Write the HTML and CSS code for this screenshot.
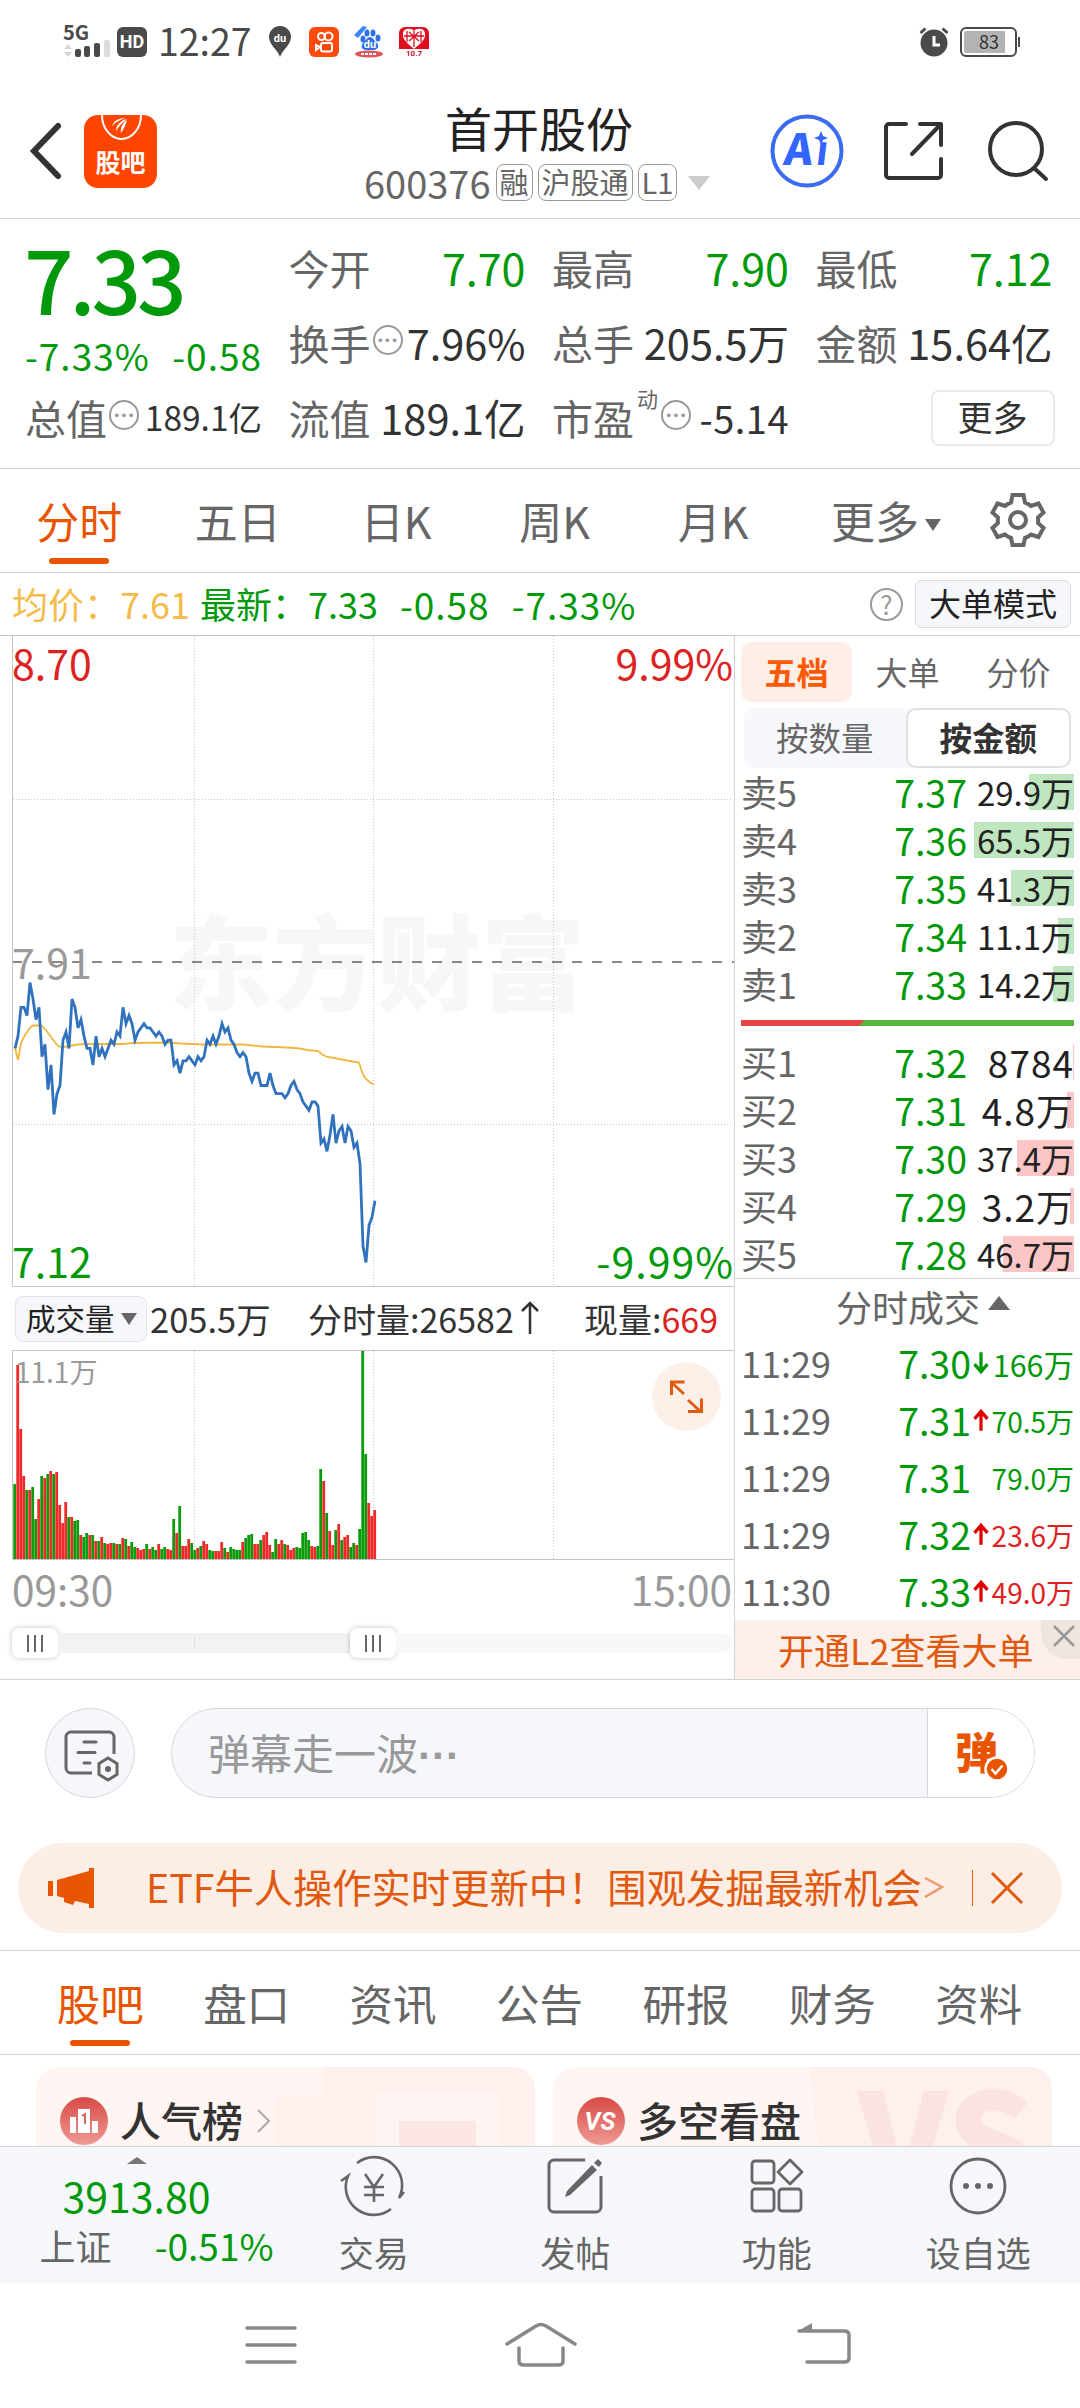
FILE: index.html
```
<!DOCTYPE html>
<html lang="zh-CN">
<head>
    <meta charset="utf-8">
    <title>首开股份 600376</title>
    <link rel="stylesheet" href="styles.css">
    <script src="chart.js" defer></script>
</head>
<body>

<!-- status bar -->
<div class="status">
    <svg class="signal" width="48" height="34" viewBox="0 0 48 34">
        <text x="0" y="15" class="net">5G</text>
        <path d="M1 24l4-5 4 5zM1 27l4 5 4-5z" fill="#d5d5d5"/>
        <rect x="12" y="24" width="6" height="8" rx="2"/>
        <rect x="21" y="21" width="6" height="11" rx="2"/>
        <rect x="31" y="18" width="6" height="14" rx="2"/>
        <rect x="41" y="15" width="6" height="17" rx="2" fill="#dcdcdc"/>
    </svg>
    <span class="hd">HD</span>
    <span class="clock">12:27</span>
    <svg class="pin" width="24" height="32" viewBox="0 0 24 32">
        <path d="M12 31C10 24 1 19 1 11a11 11 0 0 1 22 0c0 8-9 13-11 20z" fill="#4a4a4a"/>
        <text x="12" y="16" text-anchor="middle" class="du">du</text>
    </svg>
    <svg class="app" width="30" height="30" viewBox="0 0 30 30">
        <rect width="30" height="30" rx="6" fill="#ff4a0c"/>
        <g fill="none" stroke="#fff" stroke-width="2">
            <circle cx="12.500" cy="9.500" r="3.500"/>
            <circle cx="19.500" cy="9.500" r="4"/>
            <rect x="12" y="16" width="11" height="8.500" rx="2"/>
            <path d="M11 20l-4-2v5z"/>
        </g>
    </svg>
    <svg class="app" width="30" height="32" viewBox="0 0 30 32">
        <path d="M0 9L9 0l4 1-9 11z" fill="#3d86f5"/>
        <g fill="#2f6fe8">
            <ellipse cx="9" cy="13" rx="2.500" ry="3.500"/>
            <ellipse cx="13" cy="7" rx="2.500" ry="3.500"/>
            <ellipse cx="19" cy="7" rx="2.500" ry="3.500"/>
            <ellipse cx="24" cy="12" rx="2.500" ry="3.500"/>
            <path d="M16 11c3 0 4 4 7 6 3 3 0 7-3 7h-8c-4 0-6-4-3-7 3-2 4-6 7-6z"/>
        </g>
        <text x="16" y="22" text-anchor="middle" class="du">du</text>
        <ellipse cx="15" cy="28" rx="14" ry="3.500" fill="#e0555a"/>
        <path d="M7 28h16" stroke="#fff" stroke-width="2" stroke-dasharray="3 1"/>
    </svg>
    <svg class="app" width="30" height="30" viewBox="0 0 30 30">
        <path d="M6 0h18a6 6 0 0 1 6 6v16H0V6a6 6 0 0 1 6-6z" fill="#e00d1e"/>
        <path d="M15 4c3-4 12-3 11 4 0 6-7 10-11 14C11 18 4 14 4 8 3 1 12 0 15 4z" fill="#fff"/>
        <path d="M15 4v16M8 4v11M22 4v11M5 9h20M10 14l10-9M20 14L10 5" stroke="#e00d1e" stroke-width="1.300"/>
        <text x="15" y="29" text-anchor="middle" class="sale">10.7</text>
    </svg>
    <svg class="alarm" width="30" height="30" viewBox="0 0 30 30">
        <circle cx="15" cy="16" r="13.500" fill="#4a4a4a"/>
        <path d="M1.500 6l5-4.500M28.500 6l-5-4.500" stroke="#4a4a4a" stroke-width="3"/>
        <path d="M15 9v9h6" fill="none" stroke="#fff" stroke-width="3"/>
    </svg>
    <span class="battery"><i></i><b>83</b></span>
</div>

<!-- title bar -->
<div class="header">
    <svg class="back" width="32" height="56" viewBox="0 0 32 56"><path d="M28 3L4 28l24 25" fill="none" stroke="#333" stroke-width="6" stroke-linecap="round"/></svg>
    <div class="logo">
        <svg width="44" height="28" viewBox="0 0 44 28">
            <path d="M3 0a19.500 24 0 0 0 39 0" fill="none" stroke="#fff" stroke-width="2"/>
            <path d="M13 11c2-6 8-8 13-8-5 2-9 4-13 8zM17 16c0-6 5-11 11-12-4 3-8 7-11 12zM22 18c-1-5 2-11 6-13-1 4-3 9-6 13z" fill="#fff"/>
        </svg>
        <span>股吧</span>
    </div>
    <div class="stock">
        <div class="name">首开股份</div>
        <div class="code">600376<span class="tag">融</span><span class="tag">沪股通</span><span class="tag">L1</span><i class="tri"></i></div>
    </div>
    <svg class="ai" width="74" height="74" viewBox="0 0 74 74">
        <circle cx="37" cy="37" r="34.500" fill="none" stroke="#3b6cf0" stroke-width="4"/>
        <g transform="translate(6 0) skewX(-7)"><text x="13" y="51">A</text><text x="45" y="51">ı</text></g>
        <path d="M51 17l2 5 5 2-5 2-2 5-2-5-5-2 5-2z" fill="#3366ff"/>
    </svg>
    <svg class="share" width="62" height="62" viewBox="0 0 62 62">
        <path d="M23 4H6a3 3 0 0 0-3 3v48a3 3 0 0 0 3 3h49a3 3 0 0 0 3-3V39M37 4h21v21M58 4L29 34" fill="none" stroke="#333" stroke-width="4" stroke-linecap="round" stroke-linejoin="round"/>
    </svg>
    <svg class="search" width="62" height="62" viewBox="0 0 62 62">
        <g fill="none" stroke="#333" stroke-width="4" stroke-linecap="round"><circle cx="29" cy="29" r="26"/><path d="M47 48l12 11"/></g>
    </svg>
</div>

<!-- quote -->
<div class="quote">
    <div class="last">
        <div class="price">7.33</div>
        <div class="change"><span>-7.33%</span><span>-0.58</span></div>
    </div>
    <div class="cell"><label>今开</label><b class="down">7.70</b></div>
    <div class="cell"><label>最高</label><b class="down">7.90</b></div>
    <div class="cell"><label>最低</label><b class="down">7.12</b></div>
    <div class="cell"><label>换手</label><i class="dots">···</i><b>7.96%</b></div>
    <div class="cell"><label>总手</label><b>205.5万</b></div>
    <div class="cell"><label>金额</label><b>15.64亿</b></div>
    <div class="cell"><label>总值</label><i class="dots">···</i><b class="small">189.1亿</b></div>
    <div class="cell"><label>流值</label><b>189.1亿</b></div>
    <div class="cell"><label>市盈</label><sup>动</sup><i class="dots">···</i><b class="mid">-5.14</b></div>
    <div class="cell right"><span class="more">更多</span></div>
</div>

<!-- period tabs -->
<div class="periods">
    <span class="on">分时</span>
    <span>五日</span>
    <span>日K</span>
    <span>周K</span>
    <span>月K</span>
    <span class="wide">更多<i class="tri"></i></span>
    <svg width="56" height="56" viewBox="-28 -28 56 56">
        <path d="M-5.500-25h11l1.500 7.500a19 19 0 0 1 6 3.500l7.500-2.500 5 9-5.500 5a19 19 0 0 1 0 5.500l5.500 5-5 9-7.500-2.500a19 19 0 0 1-6 3.500L5.500 25h-11l-1.500-7a19 19 0 0 1-6-3.500l-7.500 2.500-5-9 5.500-5a19 19 0 0 1 0-5.500l-5.500-5 5-9 7.500 2.500a19 19 0 0 1 6-3.500z" fill="none" stroke="#666" stroke-width="4"/>
        <circle r="8" fill="none" stroke="#666" stroke-width="4"/>
    </svg>
</div>

<div class="info">
    <span class="avg">均价：7.61</span>
    <span class="now">最新：7.33</span>
    <span class="diff">-0.58</span>
    <span class="diff">-7.33%</span>
    <i class="help">?</i>
    <span class="mode">大单模式</span>
</div>

<div class="main">
    <div class="left">
        <!-- minute chart -->
        <svg class="chart" width="734" height="652" viewBox="0 635 734 652">
            <text x="377" y="1003" text-anchor="middle" class="watermark">东方财富</text>
            <g class="grid">
                <path d="M194.500 636v650M373.500 636v650M553.500 636v650M13 799.500h720M13 1124.500h720"/>
            </g>
            <path d="M12 962h722" class="prev"/>
            <path d="M12.500 635v651.500H734M0 635.500h734" class="frame"/>
            <polyline class="avgline" points="15,1048 18,1060 21,1043 24,1037 27,1032 30,1028 33,1025.500 39,1025.500 42,1026 45,1029 48,1033 54,1041 58,1046 62,1047 67,1046.500 77,1044.500 90,1044 123,1044 133,1043 170,1042.500 180,1043.500 203,1044.500 243,1044.500 263,1046.500 287,1047.500 300,1048.500 307,1050 318,1051 323,1055 328,1057 347,1060.500 359,1062.500 362,1072 365,1078 370,1082.500 374,1084.500"/>
            <polyline id="price" class="priceline"/>
            <text x="12" y="680" class="up">8.70</text>
            <text x="733" y="680" class="up" text-anchor="end">9.99%</text>
            <text x="12" y="979" class="flat">7.91</text>
            <text x="12" y="1278" class="dn">7.12</text>
            <text x="734" y="1278" class="dn spaced" text-anchor="end">-9.99%</text>
        </svg>

        <div class="volhead">
            <span class="pick">成交量<i class="tri"></i></span>
            <span class="total">205.5万</span>
            <span class="minute">分时量:26582<svg width="20" height="36" viewBox="0 0 20 36"><path d="M10 34V3M2 11l8-8 8 8" fill="none" stroke="#333" stroke-width="2.500"/></svg></span>
            <span>现量:<em>669</em></span>
        </div>

        <!-- volume -->
        <svg class="chart" width="734" height="210" viewBox="0 1350 734 210">
            <path d="M194.500 1351v208M373.500 1351v208M553.500 1351v208" class="grid"/>
            <path d="M734 1350.500H12.500v209H734" class="frame"/>
            <g id="volume"></g>
            <text x="15" y="1383" class="volmax">11.1万</text>
            <circle cx="686.500" cy="1396.500" r="34.500" fill="#fdf0e9"/>
            <path d="M671.500 1395v-13h13M672 1383l12 11M688 1400l13 12M688 1411.500h13.500v-13" fill="none" stroke="#e05a10" stroke-width="3"/>
        </svg>

        <div class="times"><span>09:30</span><span>15:00</span></div>
        <div class="slider">
            <span class="thumb"><i></i><i></i><i></i></span>
            <span class="range"></span>
            <span class="thumb"><i></i><i></i><i></i></span>
            <span class="rest"></span>
        </div>
    </div>

    <div class="side">
        <div class="sidetabs"><span class="on">五档</span><span>大单</span><span>分价</span></div>
        <div class="toggle"><span>按数量</span><span class="on">按金额</span></div>
        <div class="book sell">
            <div><span>卖5</span><b>7.37</b><em><i style="width:45px"></i>29.9万</em></div>
            <div><span>卖4</span><b>7.36</b><em><i style="width:100px"></i>65.5万</em></div>
            <div><span>卖3</span><b>7.35</b><em><i style="width:63px"></i>41.3万</em></div>
            <div><span>卖2</span><b>7.34</b><em><i style="width:16px"></i>11.1万</em></div>
            <div><span>卖1</span><b>7.33</b><em><i style="width:21px"></i>14.2万</em></div>
        </div>
        <div class="ratio"></div>
        <div class="book buy">
            <div><span>买1</span><b>7.32</b><em class="big"><i style="width:1px"></i>8784</em></div>
            <div><span>买2</span><b>7.31</b><em class="big"><i style="width:7px"></i>4.8万</em></div>
            <div><span>买3</span><b>7.30</b><em><i style="width:57px"></i>37.4万</em></div>
            <div><span>买4</span><b>7.29</b><em class="big"><i style="width:4px"></i>3.2万</em></div>
            <div><span>买5</span><b>7.28</b><em><i style="width:71px"></i>46.7万</em></div>
        </div>
        <div class="dealhead">分时成交<i></i></div>
        <div class="deals">
            <div><span>11:29</span><b>7.30</b><svg width="18" height="26" viewBox="0 0 16 24"><path d="M8 2v18M2 13l6 7 6-7" stroke="#00990a"/></svg><em class="dn large">166万</em></div>
            <div><span>11:29</span><b>7.31</b><svg width="18" height="26" viewBox="0 0 16 24"><path d="M8 22V4M2 11l6-7 6 7" stroke="#e00000"/></svg><em class="dn">70.5万</em></div>
            <div><span>11:29</span><b>7.31</b><svg width="18" height="26"></svg><em class="dn">79.0万</em></div>
            <div><span>11:29</span><b>7.32</b><svg width="18" height="26" viewBox="0 0 16 24"><path d="M8 22V4M2 11l6-7 6 7" stroke="#e00000"/></svg><em class="up">23.6万</em></div>
            <div><span>11:30</span><b>7.33</b><svg width="18" height="26" viewBox="0 0 16 24"><path d="M8 22V4M2 11l6-7 6 7" stroke="#e00000"/></svg><em class="up">49.0万</em></div>
        </div>
        <div class="promo">开通L2查看大单
            <span class="close"><svg width="24" height="24" viewBox="0 0 24 24"><path d="M2 2l20 20M22 2L2 22" stroke="#999" stroke-width="2.500"/></svg></span>
        </div>
    </div>
</div>

<!-- danmu input -->
<div class="danmu">
    <span class="set">
        <svg width="56" height="52" viewBox="0 0 56 52">
            <path d="M50 23V6a5 5 0 0 0-5-5H7a5 5 0 0 0-5 5v31a5 5 0 0 0 5 5h21" fill="none" stroke="#666" stroke-width="3" transform="translate(0 1)"/>
            <path d="M20 12h12M14 22.500h17M20 33h6" stroke="#666" stroke-width="3" stroke-linecap="round"/>
            <path d="M44 28l9 5.500v11L44 50l-9-5.500v-11z" fill="none" stroke="#666" stroke-width="3"/>
            <circle cx="44" cy="39" r="3" fill="#666"/>
        </svg>
    </span>
    <div class="input">
        <span class="hint">弹幕走一波<b>···</b></span>
        <span class="send">弹<svg width="26" height="26" viewBox="0 0 26 26"><circle cx="13" cy="13" r="11.500" fill="#e85400" stroke="#fff" stroke-width="2.500"/><path d="M7.500 13l4 4.500 7-8" fill="none" stroke="#fff" stroke-width="2.500"/></svg></span>
    </div>
</div>

<div class="banner">
    <svg width="46" height="42" viewBox="0 0 46 42"><path d="M0 14h5v15H0zM9 13l32-9V1h5v40h-5v-4l-14-3-2 4-9-3v-4l-7-2z" fill="#e85400"/></svg>
    <span class="text">ETF牛人操作实时更新中！围观发掘最新机会</span>
    <svg class="gt" width="20" height="24" viewBox="0 0 20 24"><path d="M1 2l17 9L1 21" fill="none" stroke="#eb9a6d" stroke-width="2.500"/></svg>
    <i></i>
    <svg width="34" height="34" viewBox="0 0 34 34"><path d="M2 2l30 30M32 2L2 32" stroke="#e0590f" stroke-width="3"/></svg>
</div>

<div class="sections">
    <span class="on">股吧</span><span>盘口</span><span>资讯</span><span>公告</span><span>研报</span><span>财务</span><span>资料</span>
</div>

<div class="cards">
    <div class="card">
        <svg class="deco" width="260" height="80" viewBox="0 0 260 80"><path d="M0 30h48V0h212v80H0z" fill="#fdf0ed"/><path d="M102 25h122v55H102z" fill="#fef4f2"/><path d="M124 54h77v26h-77z" fill="#fce6e3"/></svg>
        <svg width="48" height="48" viewBox="0 0 48 48">
            <circle cx="24" cy="24" r="24" fill="url(#red)"/>
            <path d="M10 20h6v16h-6zM18 12h12v24H18zM32 24h6v12h-6z" fill="#fff"/>
            <path d="M22 19l3-2v10" fill="none" stroke="#dd6560" stroke-width="2"/>
        </svg>
        <b>人气榜</b>
        <svg width="14" height="24" viewBox="0 0 14 24"><path d="M1 1l11 11L1 23" fill="none" stroke="#aaa" stroke-width="2"/></svg>
    </div>
    <div class="card">
        <svg class="deco" width="242" height="80" viewBox="0 0 242 80"><path d="M0 0h242v80H8z" fill="#fdf0ed"/><text x="48" y="128">VS</text></svg>
        <svg width="48" height="48" viewBox="0 0 48 48">
            <defs><linearGradient id="red" x2="0" y2="1"><stop stop-color="#d84a45"/><stop offset="1" stop-color="#f09a95"/></linearGradient></defs>
            <circle cx="24" cy="24" r="24" fill="url(#red)"/>
            <text x="23" y="33" text-anchor="middle" class="vs">VS</text>
        </svg>
        <b>多空看盘</b>
    </div>
</div>

<!-- bottom bar -->
<div class="toolbar">
    <div class="index">
        <i></i>
        <div class="point">3913.80</div>
        <div class="row"><span>上证</span><b>-0.51%</b></div>
    </div>
    <div class="tool">
        <svg width="68" height="60" viewBox="0 0 68 60">
            <g fill="none" stroke="#666" stroke-width="2.600">
                <path d="M17 7a28 28 0 0 1 42 35l5-6M51 53A28 28 0 0 1 8 20l-7 5"/>
                <path d="M25 18l9 13 9-13M34 31v15M24 31h20M24 39h20"/>
            </g>
        </svg>交易
    </div>
    <div class="tool">
        <svg width="56" height="60" viewBox="0 0 56 60">
            <path d="M38 4H7a5 5 0 0 0-5 5v42a5 5 0 0 0 5 5h42a5 5 0 0 0 5-5V20" fill="none" stroke="#666" stroke-width="3"/>
            <path d="M45 9l5 5-27 25-5 2 2-6zM47 7l4-4 4 4-3 4z" fill="#666"/>
        </svg>发帖
    </div>
    <div class="tool">
        <svg width="54" height="60" viewBox="0 0 54 60">
            <g fill="none" stroke="#666" stroke-width="2.800"><rect x="2" y="5" width="22" height="22" rx="3"/><rect x="2" y="33" width="22" height="22" rx="3"/><rect x="29" y="33" width="22" height="22" rx="3"/><path d="M40 4l12 12-12 12-12-12z" stroke-linejoin="round"/></g>
        </svg>功能
    </div>
    <div class="tool">
        <svg width="60" height="60" viewBox="0 0 60 60">
            <circle cx="30" cy="30" r="27" fill="none" stroke="#666" stroke-width="2.800"/>
            <g fill="#666"><circle cx="18" cy="30" r="3"/><circle cx="30" cy="30" r="3"/><circle cx="42" cy="30" r="3"/></g>
        </svg>设自选
    </div>
</div>

<!-- system navigation -->
<div class="nav">
    <svg width="52" height="40" viewBox="0 0 52 40"><path d="M2 3h48M2 20h48M2 37h48"/></svg>
    <svg width="72" height="46" viewBox="0 0 72 46"><path d="M2 22L31 4q5-3 10 0l29 18M14 26v13q0 4 5 4h34q5 0 5-4V26"/></svg>
    <svg width="54" height="46" viewBox="0 0 54 46"><path d="M2 9h45q5 0 5 4v23q0 4-5 4H10"/><path d="M1 9L15 1v9z" class="solid"/></svg>
</div>

</body>
</html>
```

FILE: chart.js
```
// one price per minute, 9:30 - 11:30
var prices = [
    7.70, 7.73, 7.80, 7.80, 7.78, 7.86, 7.82, 7.77, 7.80, 7.68, 7.71, 7.60, 7.66, 7.54, 7.59, 7.61, 7.72, 7.74, 7.70, 7.82,
    7.80, 7.75, 7.77, 7.73, 7.70, 7.70, 7.66, 7.73, 7.68, 7.70, 7.68, 7.70, 7.72, 7.71, 7.74, 7.73, 7.80, 7.76, 7.78, 7.76,
    7.72, 7.74, 7.75, 7.76, 7.75, 7.75, 7.74, 7.73, 7.74, 7.73, 7.71, 7.72, 7.72, 7.66, 7.67, 7.64, 7.67, 7.67, 7.68, 7.67,
    7.66, 7.68, 7.67, 7.68, 7.72, 7.71, 7.73, 7.71, 7.73, 7.76, 7.74, 7.75, 7.72, 7.71, 7.69, 7.68, 7.69, 7.68, 7.64, 7.62,
    7.64, 7.64, 7.61, 7.61, 7.61, 7.64, 7.61, 7.59, 7.59, 7.59, 7.58, 7.59, 7.61, 7.62, 7.60, 7.59, 7.57, 7.56, 7.55, 7.57,
    7.57, 7.56, 7.47, 7.48, 7.45, 7.49, 7.54, 7.47, 7.50, 7.51, 7.47, 7.51, 7.50, 7.46, 7.47, 7.42, 7.22, 7.18, 7.27, 7.29, 7.33
];

// bar heights, g = falling minute, r = rising minute
var volumes = 'g75 r194 r130 r83 g69 r69 g72 g40 r60 g83 r81 g85 r88 g85 r87 r54 r36 r57 g42 r42 ' +
    'g38 g39 r24 g22 g26 r24 g24 r18 g18 r22 g16 r15 r16 g16 r15 g15 r21 g20 r13 g17 ' +
    'g12 r11 r9 r10 g15 r10 g12 g9 r15 g10 g12 r10 r9 g40 r26 g53 r13 r13 r20 g16 ' +
    'g9 r11 g13 r18 r15 g9 g8 r8 r8 r17 g11 r7 g12 g10 g9 g9 r17 g21 g24 g25 ' +
    'r15 r15 g19 r24 r27 r14 g7 g20 r15 r19 g15 r14 r9 r11 g12 g11 g26 g27 g19 r13 ' +
    'r12 g13 g90 r78 g46 r28 r14 g29 r35 g19 r22 r24 g12 g16 r14 g30 g208 g105 r56 r43 r49';

var svgns = 'http://www.w3.org/2000/svg';

var points = prices.map(function (p, i) {
    var y = 962 + (7.91 - p) * 411.6;
    return (15 + i * 3) + ',' + y.toFixed(1);
});
document.getElementById('price').setAttribute('points', points.join(' '));

volumes.split(' ').forEach(function (v, i) {
    var h = Number(v.slice(1));
    var bar = document.createElementNS(svgns, 'rect');
    bar.setAttribute('x', 13.3 + i * 3);
    bar.setAttribute('y', 1559 - h);
    bar.setAttribute('width', 2.8);
    bar.setAttribute('height', h);
    bar.setAttribute('fill', v[0] == 'g' ? '#0a9a0a' : '#ee2a2a');
    document.getElementById('volume').appendChild(bar);
});
```

FILE: styles.css
```
* {
    box-sizing: border-box;
}

body {
    margin: 0;
    width: 1080px;
    background: #fff;
    color: #333;
    font-family: "Noto Sans CJK SC", sans-serif;
    line-height: 1.1;
    white-space: nowrap;
}

i, em {
    font-style: normal;
}

b {
    font-weight: 400;
}

svg {
    display: block;
    flex: none;
    overflow: visible;
}

.tri {
    display: inline-block;
    border: 8px solid transparent;
    border-top: 12px solid #666;
    border-bottom: 0;
}

/* status bar */
.status {
    display: flex;
    align-items: center;
    height: 84px;
    padding-left: 63px;
}

.signal {
    fill: #4a4a4a;
}

.net {
    font-size: 20px;
    font-weight: 700;
}

.hd {
    width: 30px;
    height: 30px;
    margin-left: 6px;
    border-radius: 6px;
    background: #4a4a4a;
    color: #fff;
    font: 700 18px/30px Roboto, sans-serif;
    text-align: center;
}

.clock {
    margin-left: 11px;
    width: 95px;
    margin-top: -4px;
    font-size: 37.500px;
    line-height: 40px;
    color: #4a4a4a;
}

.pin {
    margin-left: 15px;
}

.du {
    fill: #fff;
    font: 700 11px Roboto, sans-serif;
}

.app {
    margin-left: 15px;
}

.pin + .app {
    margin-left: 17px;
}

.sale {
    fill: #c8102e;
    font: 700 8px Roboto, sans-serif;
}

.alarm {
    margin-left: auto;
}

.battery {
    position: relative;
    width: 57px;
    height: 30px;
    margin: 0 63px 0 11px;
    padding: 2px;
    border: 2px solid #4a4a4a;
    border-radius: 6px;
    font-size: 18px;
    line-height: 20px;
}

.battery i {
    display: block;
    width: 41px;
    height: 22px;
    border-radius: 3px 0 0 3px;
    background: #b3b3b3;
}

.battery b {
    position: absolute;
    left: 17px;
    top: 2px;
}

.battery:after {
    content: "";
    position: absolute;
    right: -5px;
    top: 8px;
    width: 2px;
    height: 10px;
    background: #4a4a4a;
}

/* title bar */
.header {
    display: flex;
    align-items: center;
    height: 135px;
    padding: 0 30px 0 30px;
    border-bottom: 1px solid #d2d4d6;
}

.logo {
    display: flex;
    flex-direction: column;
    align-items: center;
    width: 73px;
    height: 73px;
    margin-left: 22px;
    border-radius: 14px;
    background: #ff4500;
    color: #fff;
    font-size: 25px;
    font-weight: 700;
    line-height: 34px;
}

.logo span {
    margin-top: 1px;
}

.stock {
    width: 350px;
    margin-left: 207px;
}

.name {
    padding-left: 81px;
    font-size: 47px;
    line-height: 58px;
    color: #222;
}

.code {
    display: flex;
    align-items: center;
    height: 44px;
    font-size: 38px;
    color: #666;
    margin-top: 5px;
}

.tag {
    height: 37px;
    margin-left: 5px;
    padding: 0 3px;
    border: 1px solid #999;
    border-radius: 8px;
    font-size: 29px;
    line-height: 33px;
}

.code .tri {
    margin-left: 11px;
    border-width: 14px 11px 0;
    border-top-color: #ccc;
}

.ai {
    margin-left: 56px;
    fill: #3366ff;
    font: 900 43px "Noto Sans CJK SC", sans-serif;
}

.share {
    margin-left: 39px;
}

.search {
    margin: 0 0 0 42px;
}

/* quote */
.quote {
    display: grid;
    grid-template-columns: repeat(4, 237px);
    grid-auto-rows: 75px;
    column-gap: 26.500px;
    height: 250px;
    padding: 11px 0 0 25px;
    border-bottom: 1px solid #d2d4d6;
}

.last {
    grid-row: span 2;
    color: #00990a;
}

.price {
    font-size: 87px;
    font-weight: 500;
    letter-spacing: -4px;
    line-height: 94px;
    margin-left: -1px;
}

.change {
    display: flex;
    justify-content: space-between;
    padding-top: 7px;
    font-size: 37px;
    letter-spacing: 1px;
    line-height: 48px;
}

.cell {
    display: flex;
    align-items: center;
    font-size: 41.500px;
}

.cell label {
    color: #666;
    font-size: 41px;
}

.cell b {
    margin-left: auto;
}

.cell .down {
    font-size: 43px;
}

.cell .small {
    font-size: 33.500px;
}

.cell .mid {
    font-size: 38px;
    letter-spacing: .5px;
}

.cell sup {
    align-self: flex-start;
    margin: 3px 1px 0 3px;
    color: #666;
    font-size: 21px;
    line-height: 30px;
}

.dots {
    width: 30px;
    height: 30px;
    margin: -6px 0 0 2px;
    border: 2px solid #999;
    border-radius: 50%;
    color: #999;
    font: 700 24px/26px Roboto, sans-serif;
    text-align: center;
}

.down, .dn {
    color: #00990a;
    fill: #00990a;
}

.up {
    color: #dd2222;
    fill: #dd2222;
}

.cell.right {
    justify-content: flex-end;
}

.more {
    width: 124px;
    height: 56px;
    border: 2px solid #e9eaeb;
    border-radius: 8px;
    font-size: 35px;
    line-height: 48px;
    text-align: center;
    margin-right: -2px;
}

/* period tabs */
.periods {
    display: flex;
    align-items: center;
    height: 104px;
    border-bottom: 1px solid #d2d4d6;
    color: #666;
    font-size: 43px;
}

.periods span {
    position: relative;
    width: 158.500px;
    line-height: 103px;
    text-align: center;
}

.periods .wide {
    width: 190px;
    font-size: 44px;
    padding-right: 3px;
}

.periods .tri {
    margin: 0 0 8px 6px;
}

.periods svg {
    margin-left: 7px;
    margin-top: -2px;
}

.on {
    color: #e85400;
}

.periods .on:after, .sections .on:after {
    content: "";
    position: absolute;
    left: 50%;
    bottom: 8px;
    width: 60px;
    height: 6px;
    margin-left: -30px;
    border-radius: 3px;
    background: #e85400;
}

.info {
    display: flex;
    align-items: center;
    height: 62px;
    padding-left: 12px;
    color: #00990a;
    font-size: 36px;
}

.info span {
    margin-right: 22px;
}

.info .avg {
    margin-right: 10px;
    color: #f5bb4b;
}

.info .diff {
    font-size: 37px;
    letter-spacing: 1px;
}

.help {
    width: 33px;
    height: 33px;
    margin-left: auto;
    border: 2px solid #999;
    border-radius: 50%;
    color: #999;
    font-size: 26px;
    line-height: 28px;
    text-align: center;
}

.info .mode {
    width: 156px;
    height: 48px;
    margin: 0 9px 0 12px;
    border: 1px solid #d9dbde;
    border-radius: 7px;
    background: #f6f7fa;
    color: #222;
    font-size: 32px;
    line-height: 43px;
    text-align: center;
}

/* chart */
.main {
    display: flex;
    height: 1045px;
    border-bottom: 1px solid #d2d4d6;
}

.left {
    width: 734px;
}

.grid {
    fill: none;
    stroke: #c8c8c8;
    stroke-dasharray: 1 2;
}

.frame {
    fill: none;
    stroke: #c4c4c4;
}

.prev {
    stroke: #888;
    stroke-width: 1.800;
    stroke-dasharray: 10 10;
}

.avgline {
    fill: none;
    stroke: #f0b73e;
    stroke-width: 1.800;
}

.priceline {
    fill: none;
    stroke: #3072bd;
    stroke-width: 2.800;
}

.chart text {
    font-size: 41px;
}

.chart .spaced {
    letter-spacing: 1px;
}

.chart .flat {
    fill: #999;
}

.chart .watermark {
    fill: #f7f7f7;
    font-size: 104px;
    font-weight: 900;
}

.chart .volmax {
    fill: #999;
    font-size: 28px;
}

.volhead {
    display: flex;
    align-items: center;
    height: 63px;
    padding-left: 15px;
    font-size: 34px;
}

.volhead em {
    color: #dd2222;
}

.pick {
    display: flex;
    align-items: center;
    justify-content: space-between;
    width: 132px;
    height: 46px;
    padding: 0 9px 2px 10px;
    border: 1px solid #e2e4e8;
    border-radius: 8px;
    background: #f6f7fa;
    font-size: 29.500px;
    color: #222;
}

.pick .tri {
    margin-top: 2px;
}

.total {
    width: 158px;
    margin-left: 3px;
    font-size: 34.500px;
}

.minute {
    display: flex;
    align-items: center;
    width: 276px;
}

.minute svg {
    margin-left: 6px;
}

.times {
    display: flex;
    justify-content: space-between;
    padding: 0 2px 0 12px;
    color: #999;
    font-size: 40.500px;
    line-height: 58px;
}

.slider {
    display: flex;
    align-items: center;
    height: 50px;
    padding-left: 12px;
}

.thumb {
    display: flex;
    align-items: center;
    justify-content: center;
    gap: 5px;
    width: 46px;
    height: 30px;
    border-radius: 7px;
    background: #fff;
    box-shadow: 0 0 5px rgba(0, 0, 0, .25);
}

.thumb i {
    width: 2px;
    height: 17px;
    background: #666;
}

.range {
    width: 292px;
    height: 20px;
    background: linear-gradient(#dcdee0, #dcdee0) 136px 4px / 1px 12px no-repeat #f1f2f4;
}

.rest {
    width: 335px;
    height: 20px;
    border-radius: 0 8px 8px 0;
    background: #f7f8fa;
}

/* order book */
.side {
    flex: 1;
    border-left: 1px solid #d2d4d6;
    border-top: 1px solid #d2d4d6;
}

.sidetabs {
    display: flex;
    padding: 6px 0 0 6px;
    color: #666;
    font-size: 32px;
    line-height: 59px;
}

.sidetabs span {
    width: 111px;
    height: 60px;
    text-align: center;
}

.sidetabs .on {
    border-radius: 10px;
    background: #feeee6;
    color: #fb5a05;
    font-weight: 700;
}

.toggle {
    display: flex;
    height: 60px;
    margin: 6px 9px 0;
    border-radius: 10px;
    background: #f7f8fb;
    color: #666;
    font-size: 32.500px;
    line-height: 57px;
    text-align: center;
}

.toggle span {
    flex: 1;
}

.toggle .on {
    border: 2px solid #dfe0e3;
    border-radius: 10px;
    background: #fff;
    color: #333;
    font-weight: 700;
    line-height: 54px;
}

.book div {
    display: flex;
    align-items: center;
    height: 48px;
    padding: 0 6px 0 6px;
    font-size: 36px;
}

.book span {
    width: 119px;
    color: #666;
}

.book b {
    width: 107px;
    color: #00990a;
    font-size: 37.500px;
    text-align: right;
}

.book em {
    position: relative;
    flex: 1;
    font-size: 33px;
    line-height: 36px;
    color: #222;
    text-align: right;
}

.book .big {
    font-size: 37px;
    letter-spacing: 1px;
}

.book i {
    position: absolute;
    z-index: -1;
    top: 0;
    right: 0;
    height: 36px;
    background: #bfe6bf;
}

.buy i {
    background: #fcc6c6;
}

.ratio {
    height: 6px;
    margin: 12px 6px 12px;
    background: linear-gradient(135deg, #e54545 87px, #56b63c 88px);
}

.sell {
    height: 240px;
}

.dealhead {
    display: flex;
    align-items: center;
    height: 57px;
    padding-left: 101px;
    border-top: 1px solid #d2d4d6;
    color: #666;
    font-size: 36px;
}

.dealhead i {
    margin: 0 0 8px 8px;
    border: 11px solid transparent;
    border-bottom: 14px solid #666;
    border-top: 0;
}

.deals div {
    display: flex;
    align-items: center;
    height: 57px;
    padding: 0 6px 2px 6px;
    font-size: 36px;
}

.deals span {
    width: 119px;
    color: #666;
}

.deals b {
    width: 111px;
    color: #00990a;
    font-size: 37.500px;
    text-align: right;
}

.deals svg {
    margin-left: 1px;
    fill: none;
    stroke-width: 3;
}

.deals em {
    margin: 4px 0 0 auto;
    font-size: 28px;
}

.deals .large {
    font-size: 30.500px;
}

.promo {
    position: relative;
    height: 59px;
    padding-left: 43px;
    background: #fcefe9;
    color: #e0590f;
    font-size: 36px;
    line-height: 59px;
}

.close {
    position: absolute;
    right: 0;
    top: 0;
    width: 39px;
    height: 39px;
    padding: 4px 0 0 11px;
    border-radius: 0 0 0 26px;
    background: #efe5df;
}

/* danmu input */
.danmu {
    display: flex;
    justify-content: space-between;
    padding: 28px 45px 45px;
}

.set {
    width: 90px;
    height: 90px;
    padding: 21px 0 0 18px;
    border: 1px solid #d5d8db;
    border-radius: 50%;
    background: #f6f7fa;
}

.input {
    display: flex;
    width: 864px;
    height: 90px;
    overflow: hidden;
    border: 1px solid #d5d8db;
    border-radius: 45px;
    background: #f6f7fa;
}

.hint {
    flex: 1;
    padding-left: 36px;
    color: #999;
    font-size: 42px;
    line-height: 86px;
}

.hint b {
    font-family: "Liberation Sans", sans-serif;
    font-weight: 700;
    line-height: 1;
}

.send {
    position: relative;
    width: 107px;
    padding-left: 27px;
    border-left: 1px solid #d5d8db;
    background: #fff;
    color: #e85400;
    font-size: 43px;
    font-weight: 900;
    line-height: 82px;
}

.send svg {
    position: absolute;
    left: 56px;
    top: 47px;
}

.banner {
    display: flex;
    align-items: center;
    height: 90px;
    margin: 0 18px 17px;
    padding-left: 30px;
    border-radius: 45px;
    background: #fceee5;
    color: #e0590f;
    font-size: 39.300px;
}

.banner .text {
    margin: -4px 0 0 52px;
}

.banner .gt {
    margin-left: 2px;
}

.banner i {
    width: 1px;
    height: 36px;
    margin: 0 17px 0 auto;
    background: #e0590f;
}

.banner svg:last-child {
    margin-right: 38px;
}

.sections {
    display: grid;
    grid-template-columns: repeat(7, 1fr);
    height: 105px;
    padding: 0 28px 0 27px;
    border: solid #d2d4d6;
    border-width: 1px 0;
    color: #666;
    font-size: 43.500px;
    line-height: 103px;
    text-align: center;
}

.sections span {
    position: relative;
}

/* cards */
.cards {
    display: flex;
    gap: 18px;
    height: 91px;
    padding: 12px 28px 0 36px;
    overflow: hidden;
}

.card {
    position: relative;
    display: flex;
    align-items: flex-start;
    flex: 1;
    height: 120px;
    padding: 30px 0 0 24px;
    overflow: hidden;
    border-radius: 22px;
    background: #fff5f3;
}

.card > * {
    position: relative;
}

.card b {
    margin: 0 14px 0 12px;
    font-size: 41px;
    font-weight: 500;
    line-height: 44px;
}

.card b + svg {
    margin-top: 12px;
}

.card .deco {
    position: absolute;
    right: 0;
    top: 0;
}

.deco text {
    fill: #fbe3e1;
    font-size: 140px;
    font-weight: 900;
}

.vs {
    fill: #fff;
    font: italic 700 25px Roboto, sans-serif;
}

/* bottom bar */
.toolbar {
    display: flex;
    height: 137px;
    border-top: 1px solid #d2d4d6;
    background: #f6f7fa;
    color: #666;
    font-size: 35px;
}

.index {
    display: flex;
    flex-direction: column;
    align-items: center;
    width: 273px;
    padding-top: 10px;
    color: #00990a;
}

.index i {
    border: 10px solid transparent;
    border-bottom: 7px solid #777;
    border-top: 0;
}

.point {
    margin-top: 7px;
    font-size: 41px;
    line-height: 48px;
}

.row {
    display: flex;
    width: 234px;
    justify-content: space-between;
    margin-left: 40px;
    line-height: 52px;
}

.row span {
    color: #666;
    font-size: 36px;
}

.row b {
    font-size: 37px;
}

.tool {
    display: flex;
    flex-direction: column;
    align-items: center;
    width: 201.500px;
    padding-top: 9px;
    line-height: 72px;
}

.nav {
    display: flex;
    align-items: center;
    height: 124px;
    padding-left: 245px;
}

.nav svg {
    fill: none;
    stroke: #888;
    stroke-width: 3.500;
    stroke-linecap: round;
}

.nav svg + svg {
    margin-left: 208px;
}

.nav svg:last-child {
    margin-left: 220px;
}

.nav .solid {
    fill: #888;
    stroke: none;
}
```
